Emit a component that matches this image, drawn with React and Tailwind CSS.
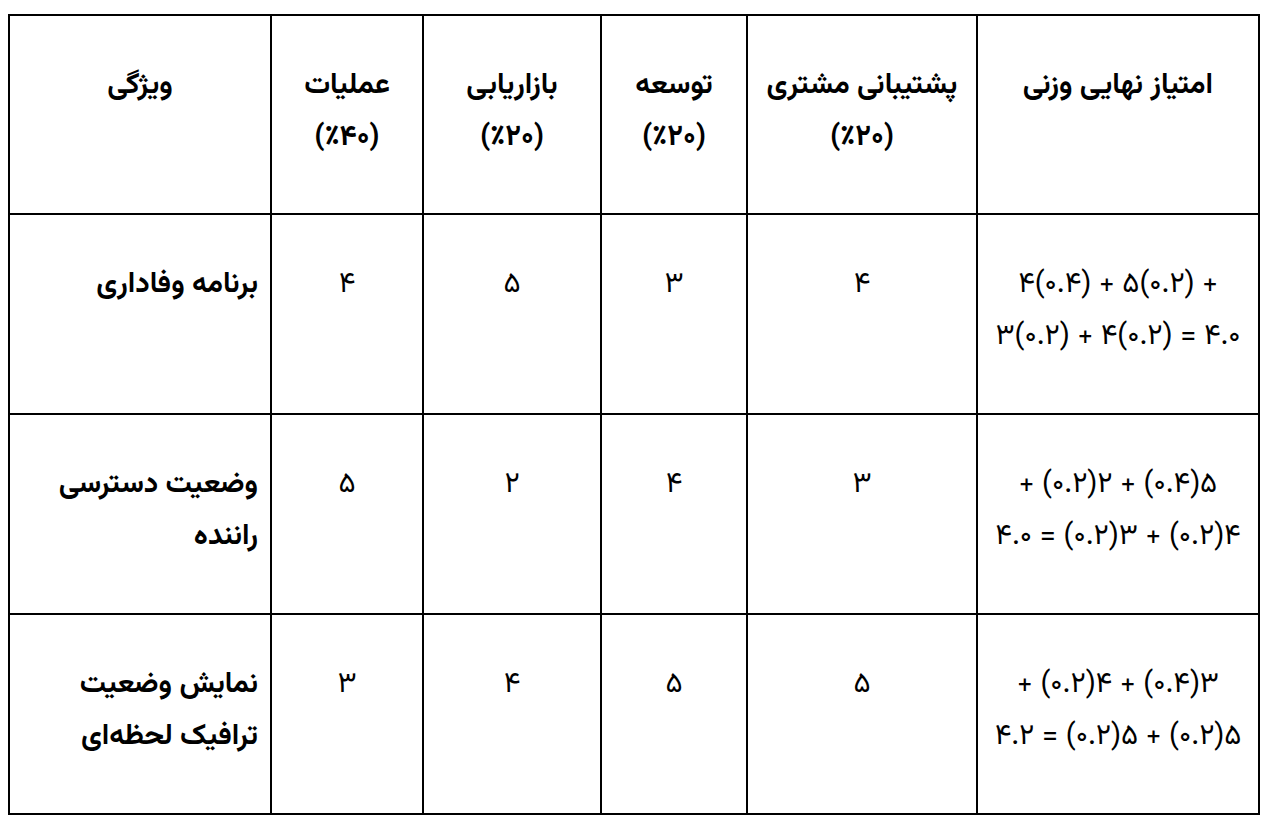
import React from "react";

const headers = [
  { lines: ["ویژگی"] },
  { lines: ["عملیات", "(٪۴۰)"] },
  { lines: ["بازاریابی", "(٪۲۰)"] },
  { lines: ["توسعه", "(٪۲۰)"] },
  { lines: ["پشتیبانی مشتری", "(٪۲۰)"] },
  { lines: ["امتیاز نهایی وزنی"] },
];

const rows = [
  {
    feature: ["برنامه وفاداری"],
    scores: ["۴", "۵", "۳", "۴"],
    formula: ["۴(۰.۴) + ۵(۰.۲) +", "۳(۰.۲) + ۴(۰.۲) = ۴.۰"],
    dir: "ltr",
  },
  {
    feature: ["وضعیت دسترسی", "راننده"],
    scores: ["۵", "۲", "۴", "۳"],
    formula: ["۵(۰.۴) + ۲(۰.۲) +", "۴(۰.۲) + ۳(۰.۲) = ۴.۰"],
    dir: "rtl",
  },
  {
    feature: ["نمایش وضعیت", "ترافیک لحظه‌ای"],
    scores: ["۳", "۴", "۵", "۵"],
    formula: ["۳(۰.۴) + ۴(۰.۲) +", "۵(۰.۲) + ۵(۰.۲) = ۴.۲"],
    dir: "rtl",
  },
];

const widths = ["w-[262px]", "w-[152px]", "w-[178px]", "w-[146px]", "w-[230px]", "w-[282px]"];

const Lines = ({ lines }) =>
  lines.map((l, i) => (
    <React.Fragment key={i}>
      {i > 0 && <br />}
      {l}
    </React.Fragment>
  ));

export default function App() {
  return (
    <div
      className="min-h-screen bg-white pl-2 pt-[14px] text-black"
      style={{ fontFamily: '"Vazirmatn", "DejaVu Sans", sans-serif' }}
    >
      <table className="w-[1250px] table-fixed border-collapse border-2 border-black text-[29px] leading-[52px]">
        <thead>
          <tr className="h-[199px]">
            {headers.map((h, i) => (
              <th
                key={i}
                dir="rtl"
                className={`${widths[i]} border-2 border-black px-2 pt-[44px] align-top text-center font-bold`}
              >
                <Lines lines={h.lines} />
              </th>
            ))}
          </tr>
        </thead>
        <tbody>
          {rows.map((r, i) => (
            <tr key={i} className="h-[200px]">
              <td dir="rtl" className="border-2 border-black px-3 pt-[44px] align-top text-right font-bold">
                <Lines lines={r.feature} />
              </td>
              {r.scores.map((s, j) => (
                <td key={j} className="border-2 border-black px-3 pt-[44px] align-top text-center">
                  {s}
                </td>
              ))}
              <td dir={r.dir} className="border-2 border-black px-1 pt-[44px] align-top text-center">
                <Lines lines={r.formula} />
              </td>
            </tr>
          ))}
        </tbody>
      </table>
    </div>
  );
}
